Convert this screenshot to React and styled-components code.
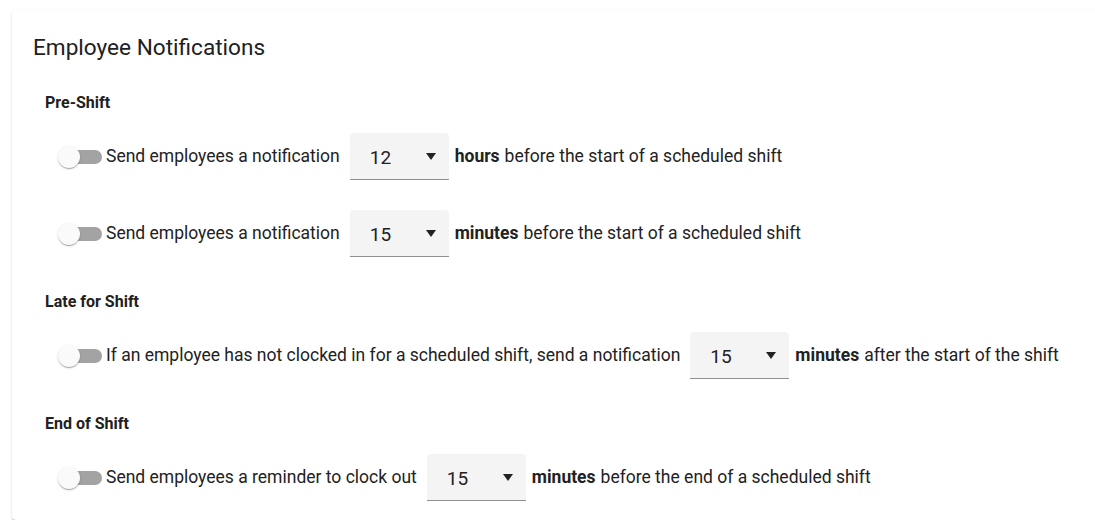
import React from 'react';
import styled, { createGlobalStyle } from 'styled-components';

const GlobalStyle = createGlobalStyle`
  html, body {
    margin: 0;
    padding: 0;
    background: #ffffff;
    overflow: hidden;
  }
  body {
    font-family: Roboto, "Liberation Sans", Arial, sans-serif;
    color: rgba(0, 0, 0, 0.87);
  }
`;

const Page = styled.div`
  padding: 10px 0 0 12px;
`;

const Card = styled.section`
  width: 1100px;
  box-sizing: border-box;
  background: #fff;
  border-radius: 4px;
  box-shadow: 0 2px 1px -1px rgba(0, 0, 0, 0.2), 0 1px 1px 0 rgba(0, 0, 0, 0.14),
    0 1px 3px 0 rgba(0, 0, 0, 0.12);
  padding: 24px 20px 19px 21px;
`;

const Title = styled.h2`
  margin: 0;
  font-size: 22.6px;
  line-height: 28px;
  font-weight: 400;
  color: #212121;
`;

const Sections = styled.div`
  display: flex;
  flex-direction: column;
  gap: 35px;
  margin-top: 31px;
  padding-left: 12px;
`;

const Section = styled.div`
  display: flex;
  flex-direction: column;
  gap: 30px;
`;

const SectionHead = styled.h3`
  margin: 0 0 -10px;
  font-size: 16px;
  line-height: 20px;
  font-weight: 700;
  color: #212121;
`;

const Row = styled.div`
  display: flex;
  align-items: center;
  padding-left: 13px;
  height: 47px;
  font-size: 17.5px;
  color: #222;
  white-space: nowrap;
`;

const Text = styled.span`
  margin-top: -2px;
`;

const SwitchRoot = styled.span`
  position: relative;
  display: inline-flex;
  align-items: center;
  width: 44px;
  height: 24px;
  margin-right: 4px;
  flex-shrink: 0;
`;

const Track = styled.span`
  position: absolute;
  left: 6px;
  right: 0;
  height: 14px;
  border-radius: 7px;
  background: ${(p) => (p.on ? '#90caf9' : '#a3a3a3')};
`;

const Thumb = styled.span`
  position: absolute;
  left: ${(p) => (p.on ? '20px' : '0')};
  width: 22px;
  height: 22px;
  border-radius: 50%;
  background: #fafafa;
  box-shadow: 0 2px 1px -1px rgba(0, 0, 0, 0.2), 0 1px 1px 0 rgba(0, 0, 0, 0.14),
    0 1px 3px 0 rgba(0, 0, 0, 0.12);
`;

const Label = styled(Text)`
  margin-right: 10px;
`;

const Select = styled.div`
  display: flex;
  align-items: center;
  justify-content: space-between;
  box-sizing: border-box;
  width: 99px;
  height: 47px;
  padding: 2px 13px 0 20px;
  margin-right: 6px;
  background: #f4f4f4;
  border-radius: 4px 4px 0 0;
  border-bottom: 1px solid #8f8f8f;
  font-size: 19px;
  color: #212121;
  flex-shrink: 0;
`;

const Unit = styled.b`
  font-weight: 700;
  margin: -2px 5px 0 0;
`;

const Switch = ({ on }) => (
  <SwitchRoot>
    <Track on={on ? 1 : 0} />
    <Thumb on={on ? 1 : 0} />
  </SwitchRoot>
);

const Caret = () => (
  <svg width="10" height="8" viewBox="0 0 10 8">
    <polygon points="0,0 10,0 5,7" fill="#222" />
  </svg>
);

const sections = [
  {
    title: 'Pre-Shift',
    rows: [
      { label: 'Send employees a notification', value: '12', unit: 'hours', rest: 'before the start of a scheduled shift' },
      { label: 'Send employees a notification', value: '15', unit: 'minutes', rest: 'before the start of a scheduled shift' },
    ],
  },
  {
    title: 'Late for Shift',
    rows: [
      {
        label: 'If an employee has not clocked in for a scheduled shift, send a notification',
        value: '15',
        unit: 'minutes',
        rest: 'after the start of the shift',
      },
    ],
  },
  {
    title: 'End of Shift',
    rows: [
      { label: 'Send employees a reminder to clock out', value: '15', unit: 'minutes', rest: 'before the end of a scheduled shift' },
    ],
  },
];

export default function App() {
  return (
    <Page>
      <GlobalStyle />
      <Card>
        <Title>Employee Notifications</Title>
        <Sections>
          {sections.map((s) => (
            <Section key={s.title}>
              <SectionHead>{s.title}</SectionHead>
              {s.rows.map((r, i) => (
                <Row key={i}>
                  <Switch />
                  <Label>{r.label}</Label>
                  <Select>
                    <span>{r.value}</span>
                    <Caret />
                  </Select>
                  <Unit>{r.unit}</Unit>
                  <Text>{r.rest}</Text>
                </Row>
              ))}
            </Section>
          ))}
        </Sections>
      </Card>
    </Page>
  );
}
